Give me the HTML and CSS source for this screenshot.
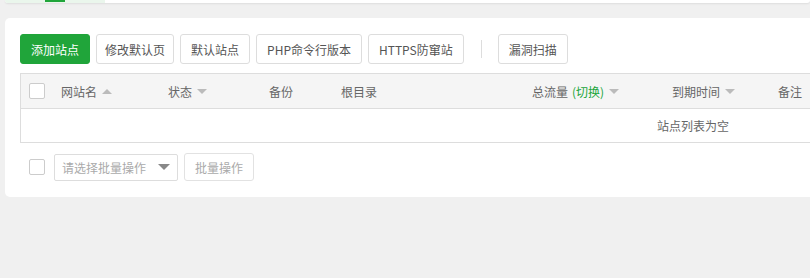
FILE: index.html
```html
<!DOCTYPE html>
<html lang="zh-CN">
<head>
    <meta charset="UTF-8">
    <meta name="viewport" content="width=device-width, initial-scale=1.0">
    <title>网站</title>
    <link rel="stylesheet" href="styles.css">
</head>
<body>
    <div class="top-bar">
        <div class="top-tab"><span class="tab-line"></span></div>
    </div>

    <div class="site-panel">
        <div class="toolbar">
            <button class="btn btn-green">添加站点</button>
            <button class="btn btn-narrow">修改默认页</button>
            <button class="btn">默认站点</button>
            <button class="btn">PHP命令行版本</button>
            <button class="btn">HTTPS防窜站</button>
            <span class="divider"></span>
            <button class="btn">漏洞扫描</button>
        </div>

        <div class="site-table">
            <div class="row head">
                <div class="cell c-check"><span class="checkbox"></span></div>
                <div class="cell c-name">网站名 <i class="arrow up"></i></div>
                <div class="cell c-status">状态 <i class="arrow down"></i></div>
                <div class="cell c-backup">备份</div>
                <div class="cell c-root">根目录</div>
                <div class="cell c-flow">总流量 <span class="switch">(切换)</span> <i class="arrow down"></i></div>
                <div class="cell c-expire">到期时间 <i class="arrow down"></i></div>
                <div class="cell c-remark">备注</div>
            </div>
            <div class="row empty">
                <div class="empty-text">站点列表为空</div>
            </div>
        </div>

        <div class="batch-bar">
            <span class="checkbox"></span>
            <div class="batch-select">
                <span>请选择批量操作</span>
                <i class="caret"></i>
            </div>
            <button class="btn btn-disabled">批量操作</button>
        </div>
    </div>
</body>
</html>
```

FILE: styles.css
```css
body {
    margin: 0;
    padding: 0 0 0 5px;
    background-color: #f0f0f0;
    font-family: "Noto Sans CJK SC", "Noto Sans", sans-serif;
    font-size: 12px;
    color: #666;
    overflow: hidden;
}
.top-bar {
    height: 3px;
    background-color: #fff;
    box-shadow: 0 1px 2px rgba(0, 0, 0, 0.08);
    border-radius: 0 0 4px 4px;
    overflow: hidden;
}
.top-tab {
    width: 100px;
    height: 3px;
    background-color: #eaf6ec;
}
.tab-line {
    display: block;
    width: 20px;
    height: 2px;
    margin-left: 40px;
    background-color: #20a53a;
}
.site-panel {
    margin-top: 15px;
    width: 840px;
    background-color: #fff;
    border-radius: 5px;
    padding: 16px 15px 16px;
    box-sizing: border-box;
}
.toolbar {
    display: flex;
    align-items: center;
    gap: 6px;
}
.btn {
    height: 30px;
    padding: 0 10px;
    border: 1px solid #ddd;
    border-radius: 3px;
    background-color: #fff;
    color: #555;
    font-family: inherit;
    font-size: 12px;
    cursor: pointer;
    flex-shrink: 0;
}
.btn-narrow {
    padding: 0 8px;
}
.btn-green {
    background-color: #20a53a;
    border-color: #20a53a;
    color: #fff;
}
.btn-disabled {
    color: #aaa;
    border-color: #e2e2e2;
    height: 28px;
}
.divider {
    width: 1px;
    height: 18px;
    background-color: #ddd;
    margin: 0 10px 0 11px;
}
.site-table {
    margin-top: 9px;
    border-top: 1px solid #ddd;
    border-bottom: 1px solid #ddd;
    border-left: 1px solid #ddd;
}
.row {
    display: flex;
    align-items: center;
}
.row.head {
    height: 34px;
    background-color: #f5f5f5;
    border-bottom: 1px solid #ddd;
}
.row.empty {
    height: 33px;
}
.cell {
    flex-shrink: 0;
    box-sizing: border-box;
    padding-left: 8px;
    white-space: nowrap;
    display: flex;
    align-items: center;
}
.c-check { width: 32px; }
.c-name { width: 107px; }
.c-status { width: 101px; }
.c-backup { width: 72px; }
.c-root { width: 191px; }
.c-flow { width: 140px; }
.c-expire { width: 106px; }
.c-remark { width: 60px; }
.switch {
    color: #20a53a;
    margin-left: 4px;
}
.arrow {
    display: inline-block;
    width: 0;
    height: 0;
    margin-left: 5px;
    border-left: 5px solid transparent;
    border-right: 5px solid transparent;
}
.arrow.up {
    border-bottom: 5px solid #bbb;
}
.arrow.down {
    border-top: 5px solid #bbb;
}
.checkbox {
    display: inline-block;
    flex-shrink: 0;
    width: 14px;
    height: 14px;
    border: 1px solid #ccc;
    border-radius: 2px;
    background-color: #fff;
}
.empty-text {
    margin-left: 636px;
}
.batch-bar {
    display: flex;
    align-items: center;
    gap: 6px;
    margin-top: 10px;
    padding-left: 9px;
}
.batch-bar .checkbox {
    margin-right: 3px;
}
.batch-select {
    width: 124px;
    height: 27px;
    box-sizing: border-box;
    border: 1px solid #ddd;
    border-radius: 2px;
    display: flex;
    align-items: center;
    justify-content: space-between;
    padding: 0 7px;
    color: #aaa;
}
.caret {
    width: 0;
    height: 0;
    border-left: 6px solid transparent;
    border-right: 6px solid transparent;
    border-top: 6px solid #888;
}
```
